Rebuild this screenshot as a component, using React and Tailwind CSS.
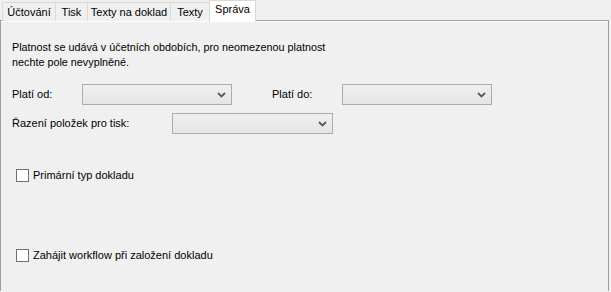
import React from "react";

const font = { fontFamily: '"Liberation Sans", Arial, sans-serif' };

function Chevron() {
  return (
    <svg width="9" height="6" viewBox="0 0 9 6" className="block">
      <polyline points="1,1 4.5,4.5 8,1" fill="none" stroke="#5a5a5a" strokeWidth="1.8" />
    </svg>
  );
}

function Select({ w }) {
  return (
    <div
      className={`${w} h-[21px] border border-[#acacac] bg-gradient-to-b from-[#f0f0f0] to-[#e5e5e5] flex items-center justify-end pr-[5px]`}
    >
      <Chevron />
    </div>
  );
}

function Checkbox({ label }) {
  return (
    <div className="flex items-center ml-[4px] h-[15px]">
      <div className="w-[13px] h-[13px] border border-[#707070] bg-white" />
      <span className="ml-[4px] text-[11px] leading-[15px] text-black">{label}</span>
    </div>
  );
}

export default function App() {
  const tabs = [
    { t: "Účtování", w: "w-[54px]" },
    { t: "Tisk", w: "w-[33px]" },
    { t: "Texty na doklad", w: "w-[84px]" },
    { t: "Texty", w: "w-[40px]" },
  ];
  return (
    <div className="w-[611px] h-[292px] bg-[#f0f0f0] overflow-hidden text-[11px] text-black" style={font}>
      <div className="flex items-end h-[21px] pl-[2px] relative z-10">
        {tabs.map((x, i) => (
          <div
            key={x.t}
            className={`${x.w} h-[19px] border border-b-0 border-[#d9d9d9] bg-[#f0f0f0] flex items-center justify-center leading-none ${i > 0 ? "-ml-px" : ""}`}
          >
            <span className="text-[11px] whitespace-nowrap">{x.t}</span>
          </div>
        ))}
        <div className="w-[47px] h-[22px] -mb-px -ml-px border border-b-0 border-[#d9d9d9] bg-white flex items-start justify-center pt-[3px] leading-none">
          <span className="text-[11px]">Správa</span>
        </div>
      </div>
      <div className="w-[609px] h-[271px] border border-b-0 border-[#a0a0a0] bg-[#f0f0f0] -mt-px">
        <div className="border-t border-white h-full pl-[11px] pt-[18px]">
          <p className="leading-[15px] text-[10.8px]">
            Platnost se udává v účetních obdobích, pro neomezenou platnost
            <br />
            nechte pole nevyplněné.
          </p>
          <div className="flex items-center mt-[14px]">
            <span className="w-[70px]">Platí od:</span>
            <Select w="w-[150px]" />
            <span className="w-[70px] ml-[40px]">Platí do:</span>
            <Select w="w-[150px]" />
          </div>
          <div className="flex items-center mt-[8px]">
            <span className="w-[160px]">Řazení položek pro tisk:</span>
            <Select w="w-[161px]" />
          </div>
          <div className="mt-[34px]">
            <Checkbox label="Primární typ dokladu" />
          </div>
          <div className="mt-[65px]">
            <Checkbox label="Zahájit workflow při založení dokladu" />
          </div>
        </div>
      </div>
    </div>
  );
}
